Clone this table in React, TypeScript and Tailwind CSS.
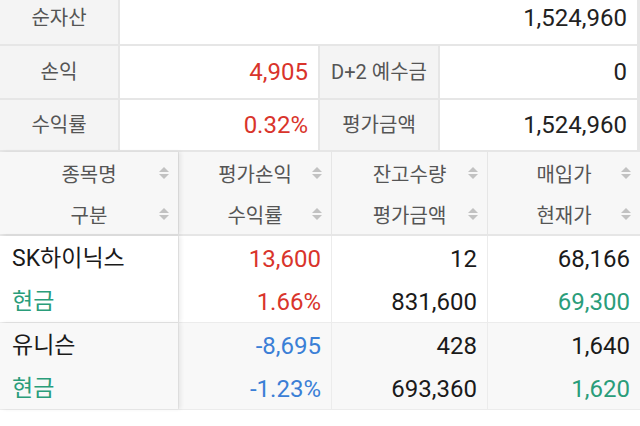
import React from "react";

const FONT = "font-['Roboto','Noto_Sans_CJK_KR',sans-serif]";

function SortIcon() {
  return (
    <svg width="12" height="14" viewBox="0 0 12 14" className="shrink-0">
      <path d="M6 1 L11 6 L1 6 Z" fill="#c2c2c2" />
      <path d="M6 13 L11 8 L1 8 Z" fill="#c2c2c2" />
    </svg>
  );
}

function HeadCell({ top, bottom, frozen }: { top: string; bottom: string; frozen?: boolean }) {
  return (
    <div
      className={`relative flex flex-col bg-[#f7f7f7] ${
        frozen ? "z-10 shadow-[3px_0_4px_rgba(0,0,0,0.07)]" : ""
      }`}
    >
      {[top, bottom].map((t) => (
        <div key={t} className="relative flex h-[41px] items-center justify-center">
          <span className="translate-y-[2px] text-[20px] text-[#555]">{t}</span>
          <span className="absolute right-[8px] top-1/2 -translate-y-1/2">
            <SortIcon />
          </span>
        </div>
      ))}
    </div>
  );
}

interface Holding {
  name: string;
  kind: string;
  pnl: string;
  rate: string;
  qty: string;
  evalAmt: string;
  buy: string;
  cur: string;
  up: boolean;
}

const holdings: Holding[] = [
  {
    name: "SK하이닉스",
    kind: "현금",
    pnl: "13,600",
    rate: "1.66%",
    qty: "12",
    evalAmt: "831,600",
    buy: "68,166",
    cur: "69,300",
    up: true,
  },
  {
    name: "유니슨",
    kind: "현금",
    pnl: "-8,695",
    rate: "-1.23%",
    qty: "428",
    evalAmt: "693,360",
    buy: "1,640",
    cur: "1,620",
    up: false,
  },
];

function Summary() {
  const label = "flex items-center justify-center bg-[#f4f4f4] text-[20px] text-[#555]";
  const value = "flex items-center justify-end bg-white pr-[10px] text-[24px] text-[#222]";
  return (
    <div className="-mt-[8px] grid grid-cols-[118px_198px_118px_197px] gap-[2px] border-r-[3px] border-b-[2px] border-[#e6e6e6] bg-[#e6e6e6]">
      <div className={`${label} h-[52px]`}>순자산</div>
      <div className={`${value} col-span-3 h-[52px]`}>1,524,960</div>

      <div className={`${label} h-[52px]`}>손익</div>
      <div className={`${value} h-[52px] text-[#d9342b]`}>4,905</div>
      <div className={`${label} h-[52px]`}>D+2 예수금</div>
      <div className={`${value} h-[52px]`}>0</div>

      <div className={`${label} h-[50px]`}>수익률</div>
      <div className={`${value} h-[50px] text-[#d9342b]`}>0.32%</div>
      <div className={`${label} h-[50px]`}>평가금액</div>
      <div className={`${value} h-[50px]`}>1,524,960</div>
    </div>
  );
}

export default function App() {
  return (
    <div className={`h-[426px] w-[640px] overflow-hidden bg-white ${FONT}`}>
      <Summary />

      <div className="grid grid-cols-[178px_152px_155px_152px] gap-x-[1px] border-r-[3px] border-b-[2px] border-[#e6e6e6] bg-[#e6e6e6]">
        <HeadCell top="종목명" bottom="구분" frozen />
        <HeadCell top="평가손익" bottom="수익률" />
        <HeadCell top="잔고수량" bottom="평가금액" />
        <HeadCell top="매입가" bottom="현재가" />
      </div>

      {holdings.map((h, i) => {
        const bg = i % 2 === 0 ? "bg-white" : "bg-[#f8f8f8]";
        const sign = h.up ? "text-[#d9342b]" : "text-[#3b7fd6]";
        const line = "flex h-[43px] items-center pt-[3px]";
        return (
          <div
            key={h.name}
            className="grid grid-cols-[178px_152px_155px_152px] gap-x-[1px] border-r-[3px] border-b border-[#ececec] bg-[#ececec]"
          >
            <div className={`relative z-10 ${bg} pl-[12px] shadow-[3px_0_4px_rgba(0,0,0,0.07)]`}>
              <div className={`${line} text-[23px] text-[#1a1a1a]`}>{h.name}</div>
              <div className={`${line} text-[23px] text-[#2a9d7a]`}>{h.kind}</div>
            </div>
            <div className={`${bg} pr-[10px] text-[24px] ${sign}`}>
              <div className={`${line} justify-end`}>{h.pnl}</div>
              <div className={`${line} justify-end`}>{h.rate}</div>
            </div>
            <div className={`${bg} pr-[10px] text-[24px] text-[#1a1a1a]`}>
              <div className={`${line} justify-end`}>{h.qty}</div>
              <div className={`${line} justify-end`}>{h.evalAmt}</div>
            </div>
            <div className={`${bg} pr-[10px] text-[24px]`}>
              <div className={`${line} justify-end text-[#1a1a1a]`}>{h.buy}</div>
              <div className={`${line} justify-end text-[#2a9d7a]`}>{h.cur}</div>
            </div>
          </div>
        );
      })}
    </div>
  );
}
